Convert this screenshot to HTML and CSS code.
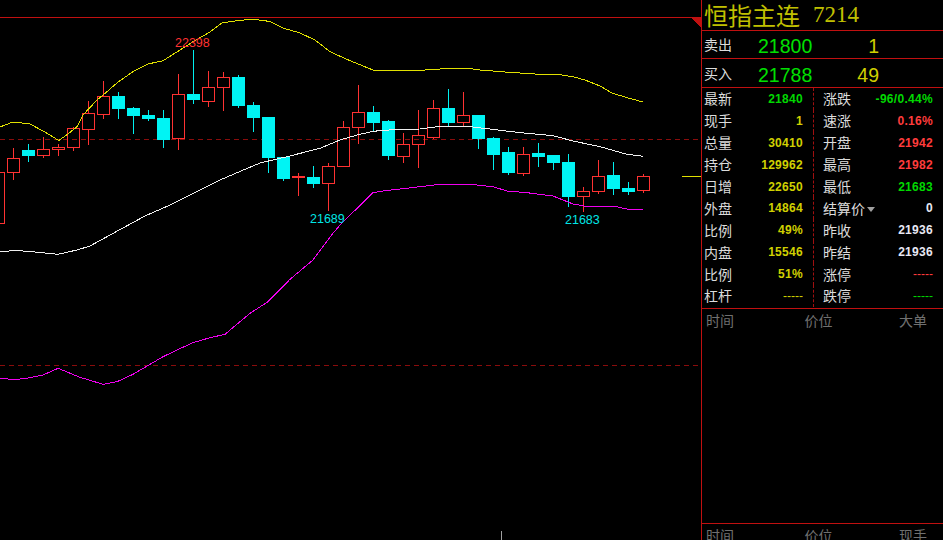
FILE: index.html
```html
<!DOCTYPE html>
<html lang="zh">
<head>
<meta charset="utf-8">
<title>恒指主连 7214</title>
<link rel="stylesheet" href="styles.css">
</head>
<body>
<main class="screen">
  <section class="chart">
    <svg class="chart-svg" width="701" height="540" viewBox="0 0 701 540">
      <path class="grid-solid" d="M0 17.5H701"/>
      <path class="grid-dash" d="M0 139.5H701M0 365.5H701"/>
      <path class="corner" d="M691 17.5H701V28z"/>
      <path class="wick-up" d="M13.5 148V158M13.5 173V180M43.5 137V149M43.5 156V158M58.5 144V147M58.5 150V156M73.5 127V128M73.5 148V151M88.5 101V113M88.5 130V145M103.5 81V96M103.5 115V119M178.5 74V94M178.5 139V150M208.5 71V87M208.5 102V107M223.5 72V77M223.5 88V111M298.5 173V196M328.5 163V166M328.5 184V211M343.5 121V127M358.5 85V112M358.5 128V144M403.5 133V144M403.5 157V163M418.5 110V135M418.5 145V168M433.5 100V108M433.5 138V139M463.5 92V115M463.5 123V126M523.5 147V154M523.5 174V176M583.5 187V191M583.5 197V212M598.5 160V176M598.5 192V194M643.5 174V176M643.5 191V193"/>
      <path class="body-up" d="M-7.5 172.5h12V223.5h-12zM7.5 158.5h12V172.5h-12zM37.5 149.5h12V155.5h-12zM52.5 147.5h12V149.5h-12zM67.5 128.5h12V147.5h-12zM82.5 113.5h12V129.5h-12zM97.5 96.5h12V114.5h-12zM172.5 94.5h12V138.5h-12zM202.5 87.5h12V101.5h-12zM217.5 77.5h12V87.5h-12zM292.5 176.5h12V177.5h-12zM322.5 166.5h12V183.5h-12zM337.5 127.5h12V166.5h-12zM352.5 112.5h12V127.5h-12zM397.5 144.5h12V156.5h-12zM412.5 135.5h12V144.5h-12zM427.5 108.5h12V137.5h-12zM457.5 115.5h12V122.5h-12zM517.5 154.5h12V173.5h-12zM577.5 191.5h12V196.5h-12zM592.5 176.5h12V191.5h-12zM637.5 176.5h12V190.5h-12z"/>
      <path class="wick-down" d="M28.5 144V162M118.5 92V119M133.5 107V134M148.5 110V121M163.5 110V148M193.5 50V104M238.5 75V108M253.5 102V132M268.5 117V173M283.5 157V181M313.5 166V188M373.5 106V132M388.5 120V160M448.5 89V127M478.5 115V149M493.5 137V170M508.5 147V175M538.5 143V167M553.5 155V170M568.5 154V207M613.5 162V195M628.5 182V195"/>
      <path class="body-down" d="M22 150h13V156h-13zM112 96h13V109h-13zM127 108h13V116h-13zM142 115h13V119h-13zM157 118h13V140h-13zM187 94h13V100h-13zM232 77h13V106h-13zM247 105h13V118h-13zM262 117h13V158h-13zM277 157h13V179h-13zM307 177h13V184h-13zM367 112h13V123h-13zM382 121h13V156h-13zM442 108h13V123h-13zM472 115h13V139h-13zM487 138h13V155h-13zM502 152h13V173h-13zM532 153h13V157h-13zM547 155h13V163h-13zM562 162h13V197h-13zM607 175h13V189h-13zM622 188h13V192h-13z"/>
      <polyline class="line line-upper" points="0,127 13,122 30,124 45,132 58.7,140.5 68,134 77,126.7 83,115 97,100 107,91.7 118,82 133,71.7 148,64 163,60.7 180,50 193,41.7 210,32 222,23 237,20.7 252,19.3 265,20.7 270,21.7 283,28 300,33 315,40 330,51.7 350,60.7 373,70 425,70 448,68.5 470,68.5 480,70 505,72 535,74 555,74 573,76.7 585,80 600,86 612,93 627,97.7 643,102"/>
      <polyline class="line line-mid" points="0,252 15,250.3 35,252 58,254.3 77,250 90,246 115,232.3 145,216 170,205 200,190 220,180 237,172.7 260,163 287,156.7 320,148.3 340,140 357,135 373,131.3 397,129.3 420,129 440,126.3 470,126.7 490,129 517,132.3 553,135.7 573,141 600,146.7 627,154.3 643,156.3"/>
      <polyline class="line line-lower" points="0,378.3 15,379.7 28,378 43,375 58,368.3 80,377.3 103,384.3 117,381.7 133,374.3 163,356.7 192,343 210,337.7 225,334.3 250,313.3 268,301.7 290,279.3 313,260 333,233.3 340,225 373,192.7 385,190.7 420,186.7 440,184.3 470,184.3 493,186.7 507,191 527,192.7 553,196 573,204 590,207 613,206 627,209 643,209.7"/>
      <text class="mark mark-high" x="175" y="47">22398</text>
      <text class="mark mark-low" x="310" y="223">21689</text>
      <text class="mark mark-low" x="565" y="224">21683</text>
      <path class="tick-yellow" d="M682 176.5H701"/>
      <path class="tick-white" d="M501.5 531V540"/>
    </svg>
  </section>

  <aside class="panel">
    <header class="title"><span class="title-name">恒指主连</span><span class="title-code">7214</span></header>
    <div class="quote quote-sell">
      <span class="label">卖出</span><span class="quote-price">21800</span><span class="quote-size">1</span>
    </div>
    <div class="quote quote-buy">
      <span class="label">买入</span><span class="quote-price">21788</span><span class="quote-size">49</span>
    </div>
    <div class="stats">
      <div class="cell cell-left"><span class="label">最新</span><span class="value green">21840</span></div>
      <div class="cell cell-right"><span class="label">涨跌</span><span class="value green">-96/0.44%</span></div>
      <div class="cell cell-left"><span class="label">现手</span><span class="value yellow">1</span></div>
      <div class="cell cell-right"><span class="label">速涨</span><span class="value red">0.16%</span></div>
      <div class="cell cell-left"><span class="label">总量</span><span class="value yellow">30410</span></div>
      <div class="cell cell-right"><span class="label">开盘</span><span class="value red">21942</span></div>
      <div class="cell cell-left"><span class="label">持仓</span><span class="value yellow">129962</span></div>
      <div class="cell cell-right"><span class="label">最高</span><span class="value red">21982</span></div>
      <div class="cell cell-left"><span class="label">日增</span><span class="value yellow">22650</span></div>
      <div class="cell cell-right"><span class="label">最低</span><span class="value green">21683</span></div>
      <div class="cell cell-left"><span class="label">外盘</span><span class="value yellow">14864</span></div>
      <div class="cell cell-right"><span class="label label-menu">结算价<i class="caret"></i></span><span class="value white">0</span></div>
      <div class="cell cell-left"><span class="label">比例</span><span class="value yellow">49%</span></div>
      <div class="cell cell-right"><span class="label">昨收</span><span class="value white">21936</span></div>
      <div class="cell cell-left"><span class="label">内盘</span><span class="value yellow">15546</span></div>
      <div class="cell cell-right"><span class="label">昨结</span><span class="value white">21936</span></div>
      <div class="cell cell-left"><span class="label">比例</span><span class="value yellow">51%</span></div>
      <div class="cell cell-right"><span class="label">涨停</span><span class="dash red">-----</span></div>
      <div class="cell cell-left"><span class="label">杠杆</span><span class="dash yellow">-----</span></div>
      <div class="cell cell-right"><span class="label">跌停</span><span class="dash green">-----</span></div>
    </div>
    <div class="list list-big">
      <div class="list-head"><span>时间</span><span>价位</span><span>大单</span></div>
    </div>
    <div class="list">
      <div class="list-head"><span>时间</span><span>价位</span><span>现手</span></div>
    </div>
  </aside>
</main>
</body>
</html>
```
FILE: styles.css
```css
html, body {
  margin: 0;
  padding: 0;
  background: #000;
  overflow: hidden;
}

.screen {
  display: flex;
  width: 943px;
  height: 540px;
  background: #000;
  font-family: "Liberation Sans", "Noto Sans CJK SC", sans-serif;
  overflow: hidden;
}

/* chart */
.chart {
  flex: 0 0 701px;
  height: 540px;
}

.chart-svg {
  display: block;
  shape-rendering: crispEdges;
}

.grid-solid { stroke: #c01010; fill: none; }
.grid-dash { stroke: #8a0c0c; stroke-dasharray: 5 4; fill: none; }
.corner { fill: #c01010; }
.line { fill: none; stroke-width: 1; }
.line-upper { stroke: #e0e000; }
.line-mid { stroke: #f0f0f0; }
.line-lower { stroke: #f000f0; }
.wick-up { stroke: #ff3232; fill: none; }
.body-up { stroke: #ff3232; fill: none; }
.wick-down { stroke: #00f0f0; fill: none; }
.body-down { fill: #00f4f4; }
.mark { font-family: "Liberation Sans", sans-serif; font-size: 12.5px; }
.mark-high { fill: #ff3232; }
.mark-low { fill: #00e6e6; }
.tick-yellow { stroke: #e0e000; }
.tick-white { stroke: #a0a0a0; }

/* side panel */
.panel {
  flex: 1;
  display: flex;
  flex-direction: column;
  border-left: 1px solid #c01010;
  min-width: 0;
  height: 540px;
}

.title {
  box-sizing: border-box;
  height: 30px;
  flex: none;
  display: flex;
  align-items: center;
  padding-left: 2px;
  color: #c0c000;
  white-space: nowrap;
}

.title-name {
  font-family: "Noto Sans CJK SC", sans-serif;
  font-size: 24px;
  line-height: 30px;
}

.title-code {
  font-family: "Liberation Serif", serif;
  font-size: 23px;
  line-height: 30px;
  margin-left: 13px;
}

.quote {
  box-sizing: border-box;
  flex: none;
  display: flex;
  align-items: center;
  border-top: 1px solid #c01010;
  padding-left: 2px;
}

.quote-sell { height: 28px; }
.quote-buy { height: 29px; }

.label {
  font-family: "Noto Sans CJK SC", sans-serif;
  font-size: 14px;
  line-height: 20px;
  margin-top: -1px;
  color: #dcdcdc;
  white-space: nowrap;
}

.quote-buy .label {
  margin-top: 0;
}

.quote-price {
  width: 55px;
  margin-left: 26px;
  margin-top: 4px;
  font-size: 19.5px;
  color: #00e000;
}

.quote-size {
  width: 66px;
  margin-top: 4px;
  text-align: right;
  font-size: 19.5px;
  color: #d0d000;
}

.stats {
  box-sizing: border-box;
  flex: none;
  display: grid;
  grid-template-columns: 112px 1fr;
  grid-auto-rows: 21.9px;
  height: 222px;
  border-top: 1px solid #c01010;
  border-bottom: 1px solid #c01010;
}

.cell {
  display: flex;
  align-items: center;
  justify-content: space-between;
}

.cell-left {
  padding: 0 10px 0 2px;
  border-right: 1px dashed #a01010;
}

.cell-right {
  padding: 0 10px 0 9px;
}

.value {
  font-size: 12px;
  font-weight: 700;
  letter-spacing: 0.3px;
}

.dash {
  font-size: 12px;
}

.green { color: #00d800; }
.yellow { color: #d0d000; }
.red { color: #ff3c3c; }
.white { color: #e8e8f4; }

.label-menu {
  display: flex;
  align-items: center;
}

.caret {
  width: 0;
  height: 0;
  margin: 3px 0 0 2px;
  border-left: 4.5px solid transparent;
  border-right: 4.5px solid transparent;
  border-top: 5px solid #a0a0a0;
}

.list {
  flex: none;
  height: 16px;
  overflow: hidden;
  border-top: 1px solid #c01010;
}

.list-big {
  height: 214px;
  border-top: 0;
}

.list-head {
  display: flex;
  justify-content: space-between;
  padding: 1px 16px 0 4px;
  font-family: "Noto Sans CJK SC", sans-serif;
  font-size: 14px;
  line-height: 20px;
  color: #707070;
}

.list-head span:nth-child(2) {
  margin-left: 4px;
}
```
